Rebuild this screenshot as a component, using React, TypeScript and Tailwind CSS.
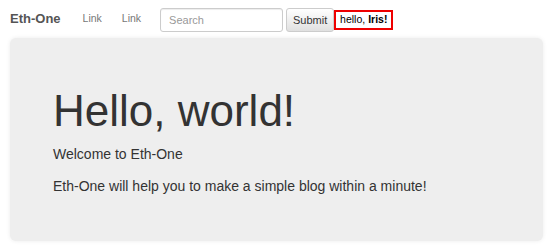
export default function App() {
  return (
    <div className="w-[550px] h-[251px] bg-white overflow-hidden font-['Liberation_Sans',Arial,sans-serif] text-[#333]">
      <nav className="h-[38px] flex items-center pl-[10px]">
        <span className="text-[13px] font-bold text-[#555]">Eth-One</span>
        <span className="ml-[22px] text-[10.5px] text-[#777]">Link</span>
        <span className="ml-[20px] text-[10.5px] text-[#777]">Link</span>
        <form className="flex items-center ml-[19px] mt-[2px]">
          <input
            placeholder="Search"
            className="w-[123px] h-[24px] border border-[#ccc] rounded-[3px] px-[8px] text-[11px] placeholder:text-[#999] shadow-[inset_0_1px_1px_rgba(0,0,0,0.075)] outline-none"
          />
          <button
            type="button"
            className="ml-[3px] w-[48px] h-[24px] border border-[#ccc] rounded-[3px] text-[11px] text-[#333] bg-gradient-to-b from-white to-[#e0e0e0]"
          >
            Submit
          </button>
          <span className="h-[20px] flex items-center border-2 border-[#e00] px-[4px] text-[10.5px] text-black">
            hello,&nbsp;<b>Iris!</b>
          </span>
        </form>
      </nav>
      <section className="mx-[10px] w-[533px] h-[203px] rounded-[6px] bg-[#eee] shadow-[0_0_4px_rgba(0,0,0,0.08)] pl-[43px] pt-[49px]">
        <h1 className="text-[44px] leading-[48px] text-[#333]">Hello, world!</h1>
        <p className="mt-[9px] text-[14px] leading-[20px]">Welcome to Eth-One</p>
        <p className="mt-[12px] text-[14px] leading-[20px]">
          Eth-One will help you to make a simple blog within a minute!
        </p>
      </section>
    </div>
  );
}
